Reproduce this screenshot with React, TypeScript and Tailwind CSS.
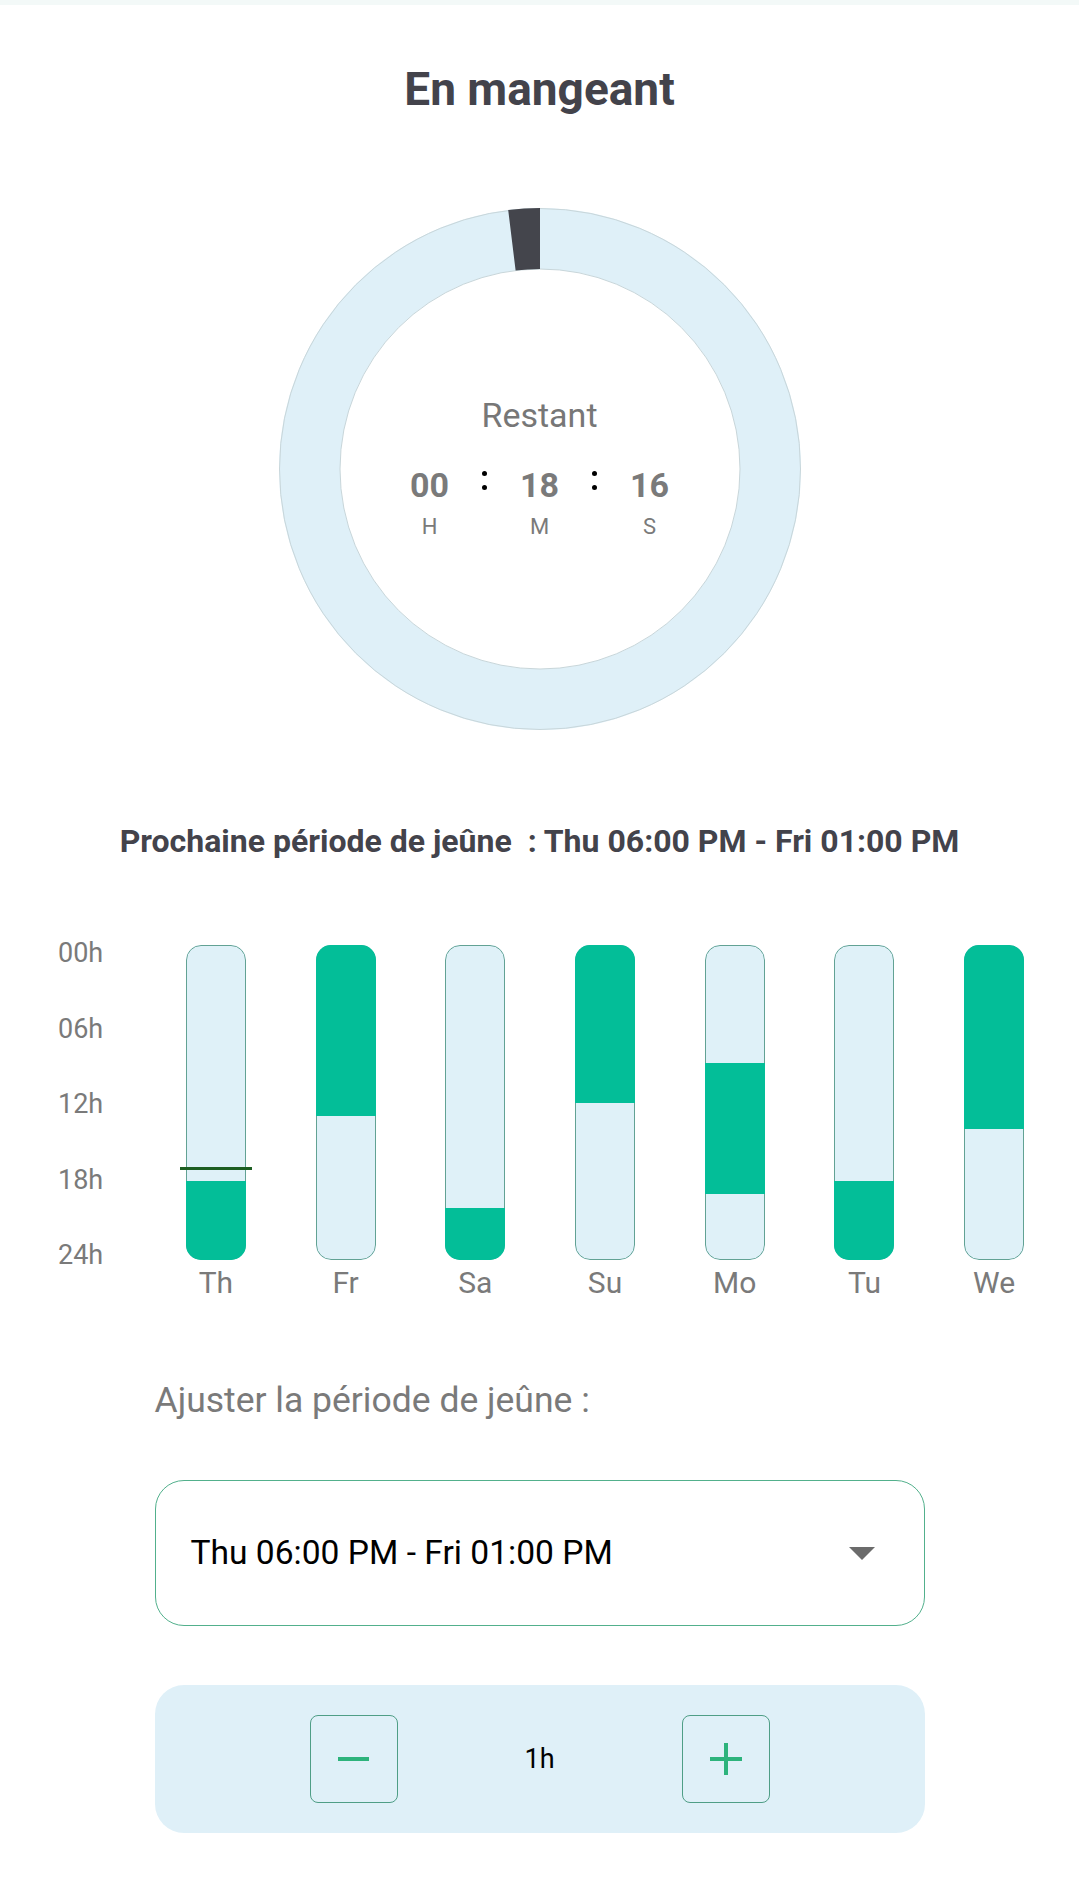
import React from "react";

const days: { label: string; segs: [number, number][]; line?: number }[] = [
  { label: "Th", segs: [[18, 24]], line: 0.711 },
  { label: "Fr", segs: [[0, 13]] },
  { label: "Sa", segs: [[20, 24]] },
  { label: "Su", segs: [[0, 12]] },
  { label: "Mo", segs: [[9, 19]] },
  { label: "Tu", segs: [[18, 24]] },
  { label: "We", segs: [[0, 14]] },
];

function Ring() {
  return (
    <div className="relative w-[522px] h-[522px] mt-[92px] flex flex-col items-center">
      <svg className="absolute inset-0" width="522" height="522" viewBox="0 0 522 522">
        <circle cx="261" cy="261" r="230.5" fill="none" stroke="#dff0f8" strokeWidth="61" />
        <circle cx="261" cy="261" r="260.5" fill="none" stroke="#c8d6da" strokeWidth="1" />
        <circle cx="261" cy="261" r="200" fill="none" stroke="#c8d6da" strokeWidth="1" />
        <path
          d="M 229.2 1.95 A 261 261 0 0 1 261 0 L 261 61 A 200 200 0 0 0 236.6 62.5 Z"
          fill="#44454c"
        />
      </svg>
      <div className="relative mt-[187px] text-[34px] leading-[40px] text-[#777777]">Restant</div>
      <div className="relative mt-[30px] flex">
        <div className="w-[80px] flex flex-col items-center">
          <div className="text-[34px] leading-[40px] font-bold text-[#7a7a7a]">00</div>
          <div className="mt-[9px] text-[22px] leading-[26px] text-[#7a7a7a]">H</div>
        </div>
        <div className="w-[30px] flex flex-col items-center pt-[6px] gap-[9px]">
          <div className="w-[5px] h-[5px] rounded-full bg-black" />
          <div className="w-[5px] h-[5px] rounded-full bg-black" />
        </div>
        <div className="w-[80px] flex flex-col items-center">
          <div className="text-[34px] leading-[40px] font-bold text-[#7a7a7a]">18</div>
          <div className="mt-[9px] text-[22px] leading-[26px] text-[#7a7a7a]">M</div>
        </div>
        <div className="w-[30px] flex flex-col items-center pt-[6px] gap-[9px]">
          <div className="w-[5px] h-[5px] rounded-full bg-black" />
          <div className="w-[5px] h-[5px] rounded-full bg-black" />
        </div>
        <div className="w-[80px] flex flex-col items-center">
          <div className="text-[34px] leading-[40px] font-bold text-[#7a7a7a]">16</div>
          <div className="mt-[9px] text-[22px] leading-[26px] text-[#7a7a7a]">S</div>
        </div>
      </div>
    </div>
  );
}

function Chart() {
  return (
    <div className="w-full mt-[78px] flex">
      <div className="w-[151px] pl-[58px] flex flex-col gap-[45.5px]">
        {["00h", "06h", "12h", "18h", "24h"].map((l) => (
          <div key={l} className="text-[27px] leading-[30px] text-[#7a7a7a]">
            {l}
          </div>
        ))}
      </div>
      <div className="w-[908px] grid grid-cols-7">
        {days.map((d) => (
          <div key={d.label} className="relative flex flex-col items-center">
            <div className="relative mt-[7px] w-[60px] h-[315px] rounded-[15px] bg-[#dff1f8] overflow-hidden">
              <div className="absolute inset-0 rounded-[15px] border border-[#62a294]" />
              {d.segs.map(([a, b], i) => (
                <div
                  key={i}
                  className="absolute left-0 right-0 bg-[#03be98]"
                  style={{ top: `${(a / 24) * 100}%`, height: `${((b - a) / 24) * 100}%` }}
                />
              ))}
            </div>
            {d.line !== undefined && (
              <div
                className="absolute w-[72px] h-[3px] bg-[#1d5e22]"
                style={{ top: `${7 + d.line * 315 - 1.5}px` }}
              />
            )}
            <div className="mt-[5px] text-[30px] leading-[36px] text-[#7a7a7a]">{d.label}</div>
          </div>
        ))}
      </div>
    </div>
  );
}

export default function App() {
  return (
    <div className="w-[1079px] h-[1884px] bg-white flex flex-col items-center overflow-hidden font-['Roboto',sans-serif]">
      <div className="w-full h-[5px] bg-[#f3f9f8]" />
      <h1 className="mt-[57px] text-[46px] leading-[54px] font-bold text-[#43434b]">En mangeant</h1>
      <Ring />
      <div className="mt-[92px] text-[32px] leading-[38px] font-bold text-[#43434b] whitespace-nowrap">
        Prochaine période de jeûne{"\u00a0\u00a0"}: Thu 06:00 PM - Fri 01:00 PM
      </div>
      <Chart />
      <div className="w-[770px] mt-[79px] flex flex-col">
        <div className="text-[35.5px] leading-[41px] text-[#7a7a7a]">Ajuster la période de jeûne :</div>
        <div className="mt-[59px] h-[146px] rounded-[29px] border border-[#52b08c] flex items-center justify-between pl-[35px] pr-[49px]">
          <span className="text-[33.6px] leading-[40px] text-black">Thu 06:00 PM - Fri 01:00 PM</span>
          <svg width="26" height="13" viewBox="0 0 26 13">
            <path d="M0 0 L26 0 L13 13 Z" fill="#6b6b6b" />
          </svg>
        </div>
        <div className="mt-[59px] h-[148px] rounded-[29px] bg-[#dff0f8] flex items-center justify-center">
          <div className="w-[88px] h-[88px] rounded-[8px] border border-[#4f9e86] flex items-center justify-center">
            <div className="w-[31px] h-[4px] bg-[#2db37c]" />
          </div>
          <div className="w-[284px] text-center text-[27px] leading-[32px] text-black">1h</div>
          <div className="w-[88px] h-[88px] rounded-[8px] border border-[#4f9e86] flex items-center justify-center relative">
            <div className="w-[32px] h-[4px] bg-[#2db37c]" />
            <div className="absolute w-[4px] h-[32px] bg-[#2db37c]" />
          </div>
        </div>
      </div>
    </div>
  );
}
